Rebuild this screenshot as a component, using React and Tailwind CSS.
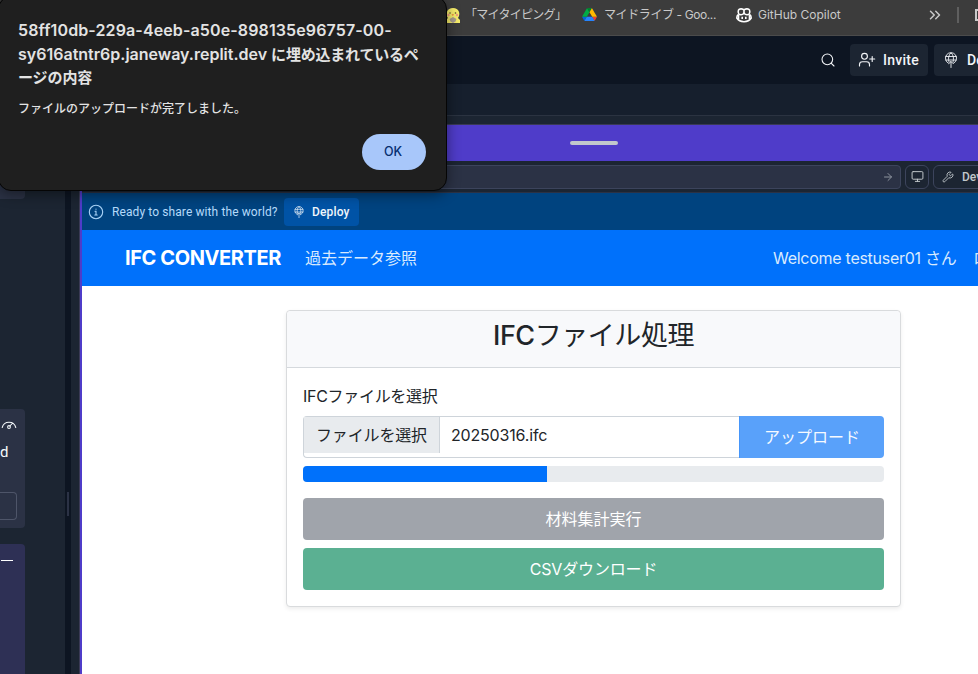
import React from "react";
import { Search, ArrowRight, Monitor, Wrench, ChevronsRight } from "lucide-react";

const PLEX = "font-['Roboto','Noto_Sans_CJK_JP',sans-serif]";

function DeployIcon({ className }) {
  return (
    <svg viewBox="0 0 16 16" fill="none" stroke="currentColor" strokeWidth="0.9" strokeLinecap="round" strokeLinejoin="round" className={className}>
      <path d="M5.500 11.300a5.600 5.600 0 1 1 5 0" />
      <path d="M2.900 4.500h10.200M2.700 8h10.600" />
      <path d="M6 10C4.900 6.500 5.500 3 8 .8c2.500 2.200 3.100 5.700 2 9.200" />
      <path d="M8 15.500V9.500M6 11.500l2-2 2 2" />
    </svg>
  );
}

function InviteIcon() {
  return (
    <svg viewBox="0 0 18 18" fill="none" stroke="currentColor" strokeWidth="1.150" strokeLinecap="round" className="h-[18px] w-[18px] shrink-0">
      <circle cx="6.500" cy="5.300" r="2.900" />
      <path d="M1.500 15v-1.500c0-1.700 1.300-2.800 3-2.800h4c1.700 0 3 1.100 3 2.800V15M14.200 5.500v5M11.700 8h5" />
    </svg>
  );
}

function InfoIcon() {
  return (
    <svg viewBox="0 0 16 16" fill="none" stroke="currentColor" strokeWidth="1.100" strokeLinecap="round" className="h-4 w-4 shrink-0 text-[#a9d3f7]">
      <circle cx="8" cy="8" r="6.700" />
      <path d="M7 7.300h1V11M6.800 11h2.400M8 5v.2" />
    </svg>
  );
}

function ChickIcon() {
  return (
    <svg viewBox="0 0 16 16" className="h-4 w-4 shrink-0">
      <path d="M1 16V13L3 11C0 7 2 1 8 1s8 6 5 10l2 2v3z" fill="#f7ee6b" />
      <circle cx="5" cy="6" r=".8" fill="#5b4b2c" />
      <circle cx="10.500" cy="6" r=".8" fill="#5b4b2c" />
      <circle cx="3.500" cy="8" r="1.200" fill="#f39a83" />
      <circle cx="12" cy="8" r="1.200" fill="#f39a83" />
      <path d="M6.500 7.300h2.500l-1.200 1.600z" fill="#ef7b35" />
      <path d="M4.500 12l1.800-1L8 10l1.700 1 1.800 1-1 2.500-2.500 1.500-2.500-1.500z" fill="#a79c90" />
    </svg>
  );
}

function DriveIcon() {
  return (
    <svg viewBox="0 0 87.3 78" className="h-[13px] w-[15px] shrink-0">
      <path d="m6.600 66.850 3.850 6.650c.8 1.400 1.950 2.500 3.300 3.300l13.750-23.800h-27.500c0 1.550.4 3.100 1.200 4.500z" fill="#0066da" />
      <path d="m43.650 25-13.750-23.800c-1.350.8-2.500 1.900-3.300 3.300l-25.400 44a9.060 9.060 0 0 0-1.200 4.500h27.500z" fill="#00ac47" />
      <path d="m73.550 76.800c1.350-.8 2.500-1.900 3.300-3.300l1.600-2.750 7.650-13.250c.8-1.400 1.200-2.950 1.200-4.500h-27.502l5.852 11.500z" fill="#ea4335" />
      <path d="m43.650 25 13.750-23.800c-1.350-.8-2.900-1.200-4.500-1.200h-18.500c-1.600 0-3.150.45-4.500 1.200z" fill="#00832d" />
      <path d="m59.800 53h-32.300l-13.750 23.800c1.350.8 2.900 1.200 4.500 1.200h50.800c1.600 0 3.150-.45 4.500-1.200z" fill="#2684fc" />
      <path d="m73.400 26.500-12.700-22c-.8-1.400-1.950-2.500-3.300-3.300l-13.750 23.800 16.150 28h27.450c0-1.550-.4-3.100-1.200-4.500z" fill="#ffba00" />
    </svg>
  );
}

function CopilotIcon() {
  return (
    <svg viewBox="0 0 16 16" className="h-4 w-4 shrink-0" fill="none" stroke="#fff" strokeWidth="1.600">
      <path d="M2.300 7.600C.9 8.300.8 9.300.8 11c1.500 2.500 4.300 3.700 7.200 3.700s5.700-1.200 7.200-3.700c0-1.700-.1-2.700-1.500-3.400" />
      <path d="M8 3.300C7.200 1.500 3.300 1.300 2.500 3c-.5 1.300-.3 3.200.3 4 1 1 3.700.9 4.600-.2.6-.8.800-2 .6-3.500zM8 3.300c.8-1.800 4.700-2 5.500-.3.5 1.300.3 3.200-.3 4-1 1-3.700.9-4.600-.2-.6-.8-.8-2-.6-3.500z" />
      <path d="M2.500 7.500v4.700M13.500 7.500v4.700M6.200 9.700v2.200M9.800 9.700v2.200" />
    </svg>
  );
}

function BrowserBar() {
  return (
    <div className="flex h-9 shrink-0 items-start border-b border-[#4b4b4b] bg-[#3c3c3c] pl-[445px] text-[12px] leading-[18px] text-[#c9c9c9]">
      <div className="mt-[7px] shrink-0"><ChickIcon /></div>
      <span className="mt-[6px] ml-[4px] w-[104px] shrink-0 tracking-[-0.700px] whitespace-nowrap">「マイタイピング」</span>
      <div className="mt-[8px] ml-[13px] shrink-0"><DriveIcon /></div>
      <span className="mt-[6px] ml-[7px] w-[125px] shrink-0 tracking-[-0.400px] whitespace-nowrap">マイドライブ - Goo...</span>
      <div className="mt-[7px] ml-[7px] shrink-0"><CopilotIcon /></div>
      <span className="mt-[6px] ml-[6px] w-[160px] shrink-0 whitespace-nowrap">GitHub Copilot</span>
      <ChevronsRight className="mt-[6px] ml-[8px] h-[18px] w-[18px] shrink-0" strokeWidth={2} />
      <div className="mt-[7px] ml-[13px] h-4 w-[2px] shrink-0 bg-[#5f5f5f]" />
      <div className="mt-[9px] ml-[16px] h-3 w-4 shrink-0 border-2 border-[#c9c9c9]" />
    </div>
  );
}

function TopBar() {
  return (
    <div className={`flex h-12 shrink-0 items-center bg-[#0d1522] pl-[820px] text-[#f2f4f7] ${PLEX}`}>
      <Search className="h-4 w-4 shrink-0" strokeWidth={1.600} />
      <div className="ml-[14px] flex h-8 w-[78px] shrink-0 items-center rounded bg-[#1c2532] pl-[8px]">
        <InviteIcon />
        <span className="ml-[7px] text-[14px] font-medium tracking-[0.250px]">Invite</span>
      </div>
      <div className="ml-[6px] flex h-8 w-[100px] shrink-0 items-center rounded bg-[#1c2532] pl-[9px]">
        <DeployIcon className="h-4 w-4 shrink-0" />
        <span className="ml-[8px] text-[14px] font-medium">Deploy</span>
      </div>
    </div>
  );
}

function Sidebar() {
  return (
    <aside className={`w-[65px] shrink-0 bg-[#1c2532] ${PLEX}`}>
      <div className="h-[83px] w-[25px] rounded-br bg-[#2b3245]" />
      <div className="mt-[210px] flex h-[119px] w-[25px] flex-col rounded-r bg-[#2b3245] text-[#f5f9fc]">
        <svg viewBox="0 0 16 12" className="mt-[10px] ml-[1px] h-3 w-4" fill="none" stroke="currentColor" strokeWidth="1.050" strokeLinecap="round">
          <path d="M1.200 8.500a7 6.800 0 0 1 13.600 0M8.800 7l3-3" />
          <circle cx="8" cy="8" r="1.400" />
        </svg>
        <span className="mt-[10px] h-[22px] text-[15px] leading-[22px]">d</span>
        <div className="mt-[29px] h-7 w-[17px] rounded-r border border-l-0 border-[#4e5569]" />
      </div>
      <div className="mt-4 h-[140px] w-[25px] rounded-tr bg-[#2e3055] pt-4">
        <div className="ml-[1px] h-[1px] w-3 bg-white" />
      </div>
    </aside>
  );
}

function AddressBar() {
  return (
    <div className={`flex h-8 shrink-0 items-center border-b border-[#2b3245] bg-[#1c2532] text-[#c2c8cc] ${PLEX}`}>
      <div className="flex h-6 w-[819px] shrink-0 items-center justify-end rounded border border-[#3c445c] bg-[#2b3245] pr-[6px]">
        <ArrowRight className="h-3 w-3 text-[#8d939e]" strokeWidth={2} />
      </div>
      <div className="ml-[4px] flex h-6 w-6 shrink-0 items-center justify-center rounded-md border border-[#3c445c]">
        <Monitor className="h-[13px] w-[13px]" strokeWidth={1.800} />
      </div>
      <div className="ml-[4px] flex h-6 w-[90px] shrink-0 items-center rounded-md border border-[#3c445c] pl-[8px]">
        <Wrench className="h-3 w-3 shrink-0" strokeWidth={1.800} />
        <span className="ml-[8px] text-[12px] font-medium">Dev Tools</span>
      </div>
    </div>
  );
}

function DeployBanner() {
  return (
    <div className={`flex h-[37px] shrink-0 items-center bg-[#00437f] pl-[6px] ${PLEX}`}>
      <InfoIcon />
      <span className="ml-[8px] w-[172px] shrink-0 text-[12px] tracking-[0.1px] whitespace-nowrap text-[#b5dafa]">Ready to share with the world?</span>
      <div className="flex h-7 w-[75px] shrink-0 items-center rounded bg-[#0053a6] pl-[9px] text-[#f0f6fb]">
        <DeployIcon className="h-3 w-3 shrink-0" />
        <span className="ml-[7px] text-[12px] font-medium tracking-[0.150px]">Deploy</span>
      </div>
    </div>
  );
}

function AppNav() {
  return (
    <nav className="flex h-14 shrink-0 items-center bg-[#0071fb] pl-[43px] whitespace-nowrap">
      <span className="w-[180px] shrink-0 text-[20px] font-bold tracking-[-0.400px] text-white">IFC CONVERTER</span>
      <span className="w-[468px] shrink-0 text-[16px] text-[#d9eafe]">過去データ参照</span>
      <span className="w-[200px] shrink-0 text-[16px] tracking-[-0.270px] text-[#d9eafe]">Welcome testuser01 さん</span>
      <span className="text-[16px] text-[#d9eafe]">ログアウト</span>
    </nav>
  );
}

function ConverterCard() {
  return (
    <section className="mt-6 ml-[204px] flex h-[297px] w-[615px] shrink-0 flex-col rounded border border-[#d9dbdd] bg-white text-[#212529] shadow-[0_2px_4px_rgba(0,0,0,0.075)]">
      <header className="h-[57px] shrink-0 rounded-t border-b border-[#d5d9dd] bg-[#f8f9fb] pt-[8px] text-center">
        <h3 className="text-[27px] leading-[33px] font-medium tracking-[-0.450px] whitespace-nowrap">
          IFC<span className="font-normal">ファイル処理</span>
        </h3>
      </header>
      <div className="flex flex-col px-4 pt-4">
        <label className="h-6 text-[16px] leading-6 tracking-[-0.300px]">IFCファイルを選択</label>
        <div className="mt-[8px] flex h-[42px]">
          <div className="flex w-[436px] items-start rounded-l border border-r-0 border-[#ced4da]">
            <div className="h-9 w-[136px] shrink-0 border-r border-[#ced4da] bg-[#e8ebee] text-center text-[16px] leading-9 tracking-[-0.150px]">ファイルを選択</div>
            <span className="ml-[11px] text-[16px] leading-9 tracking-[-0.180px]">20250316.ifc</span>
          </div>
          <button className="w-[145px] rounded-r border-l border-[#4696fa] bg-[#59a1fa] text-[16px] text-[#f6faff]">アップロード</button>
        </div>
        <div className="mt-2 h-4 overflow-hidden rounded bg-[#e8ebee]">
          <div className="h-full w-[42%] bg-[#0071fb]" />
        </div>
        <button className="mt-4 h-[42px] rounded bg-[#a0a4ab] text-[16px] text-white">材料集計実行</button>
        <button className="mt-2 h-[42px] rounded bg-[#5bb092] text-[16px] tracking-[-0.150px] text-white">CSVダウンロード</button>
      </div>
    </section>
  );
}

function AlertDialog() {
  return (
    <div className="absolute top-[-4px] left-[-2px] flex h-[195px] w-[449px] flex-col rounded-[13px] border border-[#050505] bg-[#1f1f1f] pt-[21px] pl-[19px] text-[#e3e3e3] shadow-[0_3px_14px_rgba(0,0,0,0.45)]">
      <h2 className="text-[16px] leading-6 font-semibold whitespace-nowrap">
        <span className="block h-6 tracking-[0.120px]">58ff10db-229a-4eeb-a50e-898135e96757-00-</span>
        <span className="block h-6">
          sy616atntr6p.janeway.replit.dev <span className="text-[15px] tracking-[-0.200px]">に埋め込まれているペ</span>
        </span>
        <span className="block h-6 text-[15px] tracking-[-0.100px]">ージの内容</span>
      </h2>
      <p className="mt-[9px] text-[12px] leading-5 font-medium">ファイルのアップロードが完了しました。</p>
      <button className="mt-[15px] ml-[344px] h-9 w-16 rounded-full bg-[#a8c7fa] pr-[2px] text-[12.500px] font-medium text-[#062e6f]">OK</button>
    </div>
  );
}

export default function App() {
  return (
    <div className="relative flex h-[674px] w-[978px] flex-col overflow-hidden bg-[#1c2532] font-['Inter','Noto_Sans_CJK_JP',sans-serif]">
      <BrowserBar />
      <TopBar />
      <div className="h-8 shrink-0 border-b border-[#2b3341] bg-[#161f2d]" />
      <div className="flex h-[558px] shrink-0">
        <Sidebar />
        <div className="flex w-[6px] shrink-0 justify-center bg-[#0d1522]">
          <div className="mt-[376px] h-6 w-[2px] bg-[#2b3245]" />
        </div>
        <div className="w-2 shrink-0 bg-[#1c2532]" />
        <main className="mt-2 flex w-[899px] shrink-0 flex-col border-t border-l border-[#3a3a55]">
          <div className="flex h-9 shrink-0 bg-[#4f3cc9] pt-4 pl-[490px]">
            <div className="h-1 w-12 rounded-sm bg-[#c2c8cc]" />
          </div>
          <div className="flex flex-1 flex-col border-l-2 border-[#4f3cc9]">
            <AddressBar />
            <DeployBanner />
            <AppNav />
            <div className="flex flex-1 flex-col bg-white">
              <ConverterCard />
            </div>
          </div>
        </main>
      </div>
      <AlertDialog />
    </div>
  );
}
